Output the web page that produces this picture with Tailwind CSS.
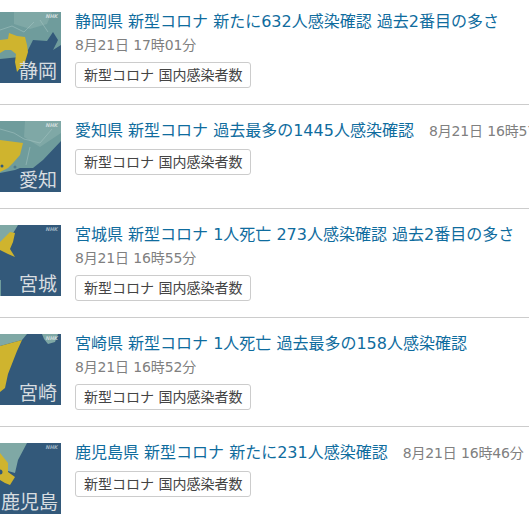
<!DOCTYPE html>
<html lang="ja">
<head>
<meta charset="utf-8">
<title>新型コロナ 国内感染者数</title>
<script src="https://cdn.jsdelivr.net/npm/@tailwindcss/browser@4"></script>
</head>
<body class="bg-white overflow-hidden font-['DejaVu_Sans','Noto_Sans_CJK_JP',sans-serif] text-[#444]">
<ul class="w-[529px] h-[529px] overflow-hidden">

  <li class="flex pt-[10px] pb-4 border-b border-[#ccc]">
    <div class="relative w-[61px] h-[71px] mt-[2px] shrink-0 overflow-hidden bg-[#33597a]">
      <svg class="w-full h-full blur-[0.6px]" viewBox="0 0 61 71">
        <path fill="#6f9c9c" d="M0 0H61V33L53 38 58 28 53 20 47 29 33 28 28 38 20 45 0 47Z"/>
        <path fill="#7fa8a6" d="M14 0H52L47 12 30 17 14 12Z"/>
        <path fill="none" stroke="#a9c6c4" stroke-width="0.5" d="M0 18 12 14 24 20 34 10M40 8 48 20"/>
        <path fill="#cfb42e" d="M0 28 8 27 9 21 17 24 25 25 27 33 28 40 25 50 17 60 15 50 16 42 11 38 5 38 0 41Z"/>
      </svg>
      <span class="absolute right-[3px] top-[1px] text-[5px] leading-[7px] italic font-bold text-[#cfdcdc]">NHK</span>
      <span class="absolute right-[4px] bottom-0 text-[19px] leading-[24px] text-[#d8dde0] whitespace-nowrap">静岡</span>
    </div>
    <div class="ml-[14px] min-w-0">
      <p class="h-6 leading-6 whitespace-nowrap"><a href="#" class="text-base text-[#0f6c9e]">静岡県 新型コロナ 新たに632人感染確認 過去2番目の多さ</a></p>
      <p class="h-[22px] leading-[22px] text-sm text-[#808080] tracking-[-0.15px] whitespace-nowrap">8月21日 17時01分</p>
      <span class="inline-flex items-center h-[26px] mt-[6px] px-2 border border-[#ccc] rounded-[3px] text-sm whitespace-nowrap">新型コロナ 国内感染者数</span>
    </div>
  </li>

  <li class="flex pt-[14px] pb-4 border-b border-[#ccc]">
    <div class="relative w-[61px] h-[71px] mt-[2px] shrink-0 overflow-hidden bg-[#33597a]">
      <svg class="w-full h-full blur-[0.6px]" viewBox="0 0 61 71">
        <path fill="#6f9c9c" d="M0 0H61V20L43 39 33 47 20 47 15 49 0 52Z"/>
        <path fill="#7fa8a6" d="M25 0H61V12L40 26 24 16Z"/>
        <path fill="none" stroke="#a9c6c4" stroke-width="0.5" d="M0 8 14 12 24 18 40 22 52 8M30 26 26 44"/>
        <path fill="#cfb42e" d="M0 19 23 22 20 34 13 42 8 47 0 51Z"/>
        <circle cx="2" cy="45" r="1.5" fill="#33597a"/>
        <circle cx="15" cy="46" r="1.5" fill="#4f7a8c"/>
      </svg>
      <span class="absolute right-[3px] top-[1px] text-[5px] leading-[7px] italic font-bold text-[#cfdcdc]">NHK</span>
      <span class="absolute right-[4px] bottom-0 text-[19px] leading-[24px] text-[#d8dde0] whitespace-nowrap">愛知</span>
    </div>
    <div class="ml-[14px] min-w-0">
      <p class="h-6 leading-6 whitespace-nowrap"><a href="#" class="text-base text-[#0f6c9e]">愛知県 新型コロナ 過去最多の1445人感染確認</a><span class="ml-[15px] text-sm text-[#808080] tracking-[-0.15px]">8月21日 16時57分</span></p>
      <span class="inline-flex items-center h-[26px] mt-[6px] px-2 border border-[#ccc] rounded-[3px] text-sm whitespace-nowrap">新型コロナ 国内感染者数</span>
    </div>
  </li>

  <li class="flex pt-[14px] pb-4 border-b border-[#ccc]">
    <div class="relative w-[61px] h-[71px] mt-[2px] shrink-0 overflow-hidden bg-[#33597a]">
      <svg class="w-full h-full blur-[0.6px]" viewBox="0 0 61 71">
        <path fill="#7fa8a5" d="M0 0H18L12 10 0 18Z"/>
        <path fill="#cfb42e" d="M0 17 10 7 15 8 13 17 10 24 15 32 8 29 0 25Z"/>
        <path fill="#6f9c9c" d="M0 55H1L1 71H0Z"/>
      </svg>
      <span class="absolute right-[3px] top-[1px] text-[5px] leading-[7px] italic font-bold text-[#9fb5c4]">NHK</span>
      <span class="absolute right-[4px] bottom-0 text-[19px] leading-[24px] text-[#d8dde0] whitespace-nowrap">宮城</span>
    </div>
    <div class="ml-[14px] min-w-0">
      <p class="h-6 leading-6 whitespace-nowrap"><a href="#" class="text-base text-[#0f6c9e]">宮城県 新型コロナ 1人死亡 273人感染確認 過去2番目の多さ</a></p>
      <p class="h-[22px] leading-[22px] text-sm text-[#808080] tracking-[-0.15px] whitespace-nowrap">8月21日 16時55分</p>
      <span class="inline-flex items-center h-[26px] mt-[6px] px-2 border border-[#ccc] rounded-[3px] text-sm whitespace-nowrap">新型コロナ 国内感染者数</span>
    </div>
  </li>

  <li class="flex pt-[14px] pb-4 border-b border-[#ccc]">
    <div class="relative w-[61px] h-[71px] mt-[2px] shrink-0 overflow-hidden bg-[#33597a]">
      <svg class="w-full h-full blur-[0.6px]" viewBox="0 0 61 71">
        <path fill="#7fa8a5" d="M0 0H27L22 6 0 12Z"/>
        <path fill="#7fa8a5" d="M42 0H58L55 8 48 10 44 5Z"/>
        <path fill="#cfb42e" d="M0 12 22 6 17 17 8 40 5 54 0 58Z"/>
      </svg>
      <span class="absolute right-[3px] top-[1px] text-[5px] leading-[7px] italic font-bold text-[#cfdcdc]">NHK</span>
      <span class="absolute right-[4px] bottom-0 text-[19px] leading-[24px] text-[#d8dde0] whitespace-nowrap">宮崎</span>
    </div>
    <div class="ml-[14px] min-w-0">
      <p class="h-6 leading-6 whitespace-nowrap"><a href="#" class="text-base text-[#0f6c9e]">宮崎県 新型コロナ 1人死亡 過去最多の158人感染確認</a></p>
      <p class="h-[22px] leading-[22px] text-sm text-[#808080] tracking-[-0.15px] whitespace-nowrap">8月21日 16時52分</p>
      <span class="inline-flex items-center h-[26px] mt-[6px] px-2 border border-[#ccc] rounded-[3px] text-sm whitespace-nowrap">新型コロナ 国内感染者数</span>
    </div>
  </li>

  <li class="flex pt-[14px] pb-4">
    <div class="relative w-[61px] h-[71px] mt-[2px] shrink-0 overflow-hidden bg-[#33597a]">
      <svg class="w-full h-full blur-[0.6px]" viewBox="0 0 61 71">
        <path fill="#7fa8a5" d="M0 0H27L18 17 15 30 8 28 0 12Z"/>
        <path fill="#cfb42e" d="M0 10 8 20 8 29 15 34 10 42 5 40 0 37Z"/>
        <circle cx="0" cy="29" r="2.5" fill="#33597a"/>
      </svg>
      <span class="absolute right-[3px] top-[1px] text-[5px] leading-[7px] italic font-bold text-[#9fb5c4]">NHK</span>
      <span class="absolute right-[3px] bottom-0 text-[19px] leading-[24px] text-[#d8dde0] whitespace-nowrap">鹿児島</span>
    </div>
    <div class="ml-[14px] min-w-0">
      <p class="h-6 leading-6 whitespace-nowrap"><a href="#" class="text-base text-[#0f6c9e]">鹿児島県 新型コロナ 新たに231人感染確認</a><span class="ml-[15px] text-sm text-[#808080] tracking-[-0.15px]">8月21日 16時46分</span></p>
      <span class="inline-flex items-center h-[26px] mt-[6px] px-2 border border-[#ccc] rounded-[3px] text-sm whitespace-nowrap">新型コロナ 国内感染者数</span>
    </div>
  </li>

</ul>
</body>
</html>
